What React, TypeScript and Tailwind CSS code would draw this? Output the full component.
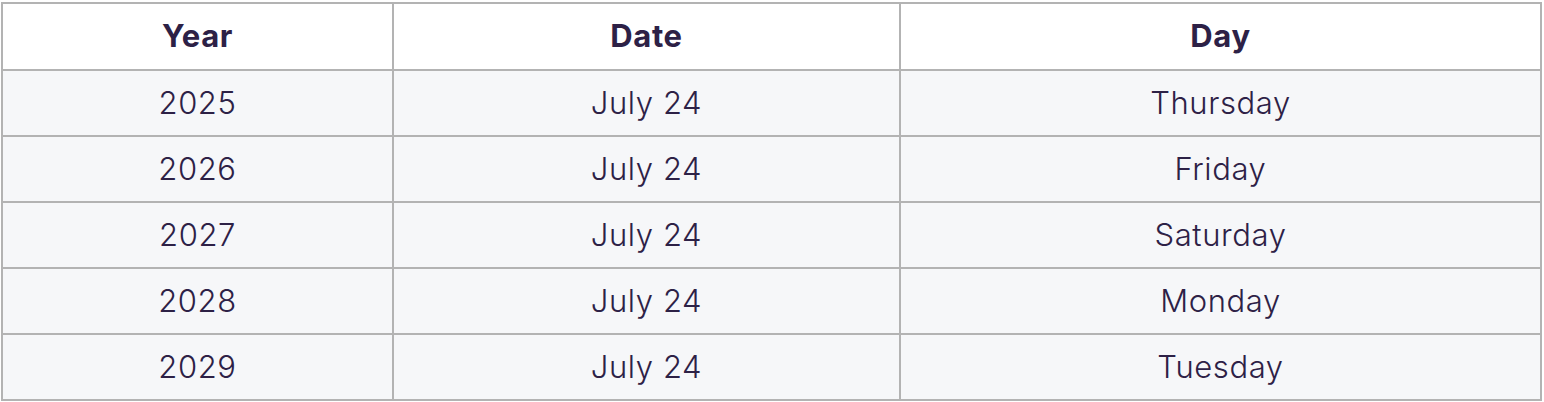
const rows = [
  { year: "2025", date: "July 24", day: "Thursday" },
  { year: "2026", date: "July 24", day: "Friday" },
  { year: "2027", date: "July 24", day: "Saturday" },
  { year: "2028", date: "July 24", day: "Monday" },
  { year: "2029", date: "July 24", day: "Tuesday" },
];

export default function App() {
  return (
    <div className="w-[1544px] h-[402px] bg-white pt-[2px] pl-[1px] font-['Inter','Liberation_Sans',sans-serif] text-[#2d2146] tracking-[0.6px]">
      <table className="table-fixed border-collapse w-[1539px]">
        <colgroup>
          <col className="w-[391px]" />
          <col className="w-[507px]" />
          <col className="w-[641px]" />
        </colgroup>
        <thead>
          <tr className="h-[67px] bg-white">
            <th className="border-2 border-[#b3b3b3] text-[31px] font-bold text-center">Year</th>
            <th className="border-2 border-[#b3b3b3] text-[31px] font-bold text-center">Date</th>
            <th className="border-2 border-[#b3b3b3] text-[31px] font-bold text-center">Day</th>
          </tr>
        </thead>
        <tbody>
          {rows.map((r) => (
            <tr key={r.year} className="h-[66px] bg-[#f6f7f9]">
              <td className="border-2 border-[#b3b3b3] text-[31px] font-light text-center">{r.year}</td>
              <td className="border-2 border-[#b3b3b3] text-[31px] font-light text-center">{r.date}</td>
              <td className="border-2 border-[#b3b3b3] text-[31px] font-light text-center">{r.day}</td>
            </tr>
          ))}
        </tbody>
      </table>
    </div>
  );
}
